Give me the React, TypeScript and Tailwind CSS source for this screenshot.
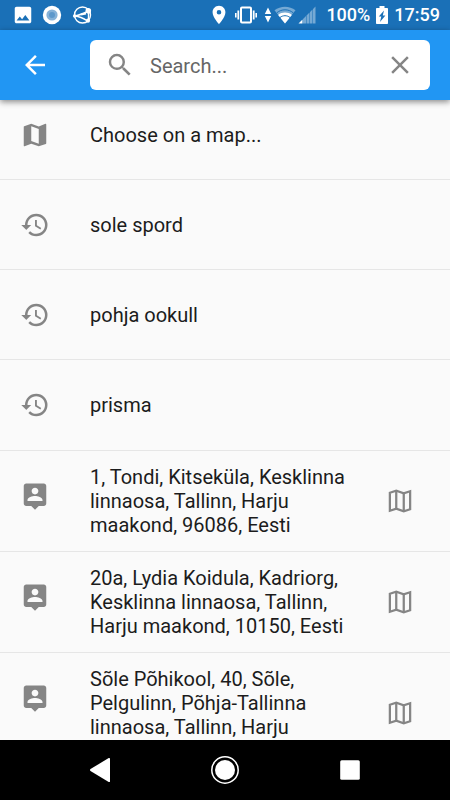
import { useState } from 'react';
import { MdArrowBack, MdClose, MdHistory, MdImage, MdMap, MdPlace, MdSearch } from 'react-icons/md';

const recentSearches = ['sole spord', 'pohja ookull', 'prisma'];

const addresses = [
  '1, Tondi, Kitseküla, Kesklinna linnaosa, Tallinn, Harju maakond, 96086, Eesti',
  '20a, Lydia Koidula, Kadriorg, Kesklinna linnaosa, Tallinn, Harju maakond, 10150, Eesti',
  'Sõle Põhikool, 40, Sõle, Pelgulinn, Põhja-Tallinna linnaosa, Tallinn, Harju',
];

const OutlineMapIcon = () => (
  <svg viewBox="0 0 24 24" className="h-[30px] w-[30px]" fill="none" stroke="currentColor" strokeWidth="1.8" aria-hidden="true">
    <path d="M3.9 5.4 9 3.8l6 2.1 5.1-1.7v14.4L15 20.2l-6-2.1-5.1 1.7z" />
    <path d="M9 3.8v14.3M15 5.9v14.3" />
  </svg>
);

const PersonPinIcon = () => (
  <svg viewBox="0 0 24 24" className="h-[30px] w-[30px]" fill="currentColor" aria-hidden="true">
    <path d="M19 2H5c-1.110 0-2 .9-2 2v14c0 1.100.89 2 2 2h4l3 3 3-3h4c1.100 0 2-.9 2-2V4c0-1.100-.9-2-2-2zm-7 3.300c1.490 0 2.700 1.210 2.700 2.700s-1.210 2.700-2.700 2.700S9.300 9.490 9.300 8s1.210-2.700 2.700-2.700zM18 16H6v-.9c0-2 4-3.100 6-3.100s6 1.100 6 3.100v.9z" />
  </svg>
);

const StatusBar = () => (
  <div className="flex h-[30px] shrink-0 items-center justify-between bg-[#1a70b7] pr-[10px] pl-3 text-lg font-medium text-white">
    <div className="flex items-center gap-2">
      <MdImage className="h-[22px] w-[22px]" />
      <svg viewBox="0 0 20 20" className="h-5 w-5" aria-hidden="true">
        <circle cx="10" cy="10" r="9.2" fill="#fff" />
        <circle cx="10" cy="10" r="5.6" fill="#86b2d8" />
        <circle cx="10" cy="10" r="3" fill="#5d98cb" />
      </svg>
      <svg viewBox="0 0 20 20" className="ml-0.5 h-5 w-5" fill="none" stroke="currentColor" strokeWidth="1.4" aria-hidden="true">
        <circle cx="10.500" cy="10" r="8" />
        <path d="M2.500 11Q7 10.500 15.500 6.500M2.500 11Q9 11.500 15.500 16M16.500 6.500v9" />
        <path d="M9 9.500 14 8.500" strokeWidth="2" />
        <circle cx="2.700" cy="11" r="1.800" fill="currentColor" stroke="none" />
        <circle cx="16.300" cy="5.800" r="2.800" fill="currentColor" stroke="none" />
        <circle cx="16" cy="15.700" r="2.100" fill="currentColor" stroke="none" />
      </svg>
    </div>
    <div className="flex items-center gap-0.5">
      <MdPlace className="h-[22px] w-[22px]" />
      <svg viewBox="0 0 24 18" className="ml-0.5 h-[18px] w-6" fill="none" stroke="currentColor" aria-hidden="true">
        <rect x="7" y="1.500" width="10" height="15" rx="1" strokeWidth="2" />
        <path d="M4.300 4.500v9M19.700 4.500v9" strokeWidth="1.800" />
        <path d="M1.800 7v4.500M22.200 7v4.500" strokeWidth="1.600" />
      </svg>
      <svg viewBox="0 0 8 18" className="ml-1 h-[18px] w-2" fill="currentColor" aria-hidden="true">
        <path d="M4 1.500 7.200 8H.8zM4 16.500.8 10h6.400z" />
      </svg>
      <svg viewBox="0 0 22 18" className="h-[18px] w-[22px]" fill="currentColor" aria-hidden="true">
        <path opacity=".4" d="M11 17.500.5 4.300C6.500-.6 15.500-.6 21.500 4.300z" />
        <path d="M11 17.500 4.200 9c3.600-3.200 10-3.200 13.600 0z" />
        <path d="M2.800 6.800c4.600-4 11.800-4 16.400 0M6 11.500c3-2.400 7-2.400 10 0" fill="none" stroke="#1a70b7" strokeWidth="1" />
      </svg>
      <svg viewBox="0 0 18 18" className="h-[18px] w-[18px]" fill="currentColor" aria-hidden="true">
        <path d="M.5 17.500 4.500 13.500v4z" />
        <path opacity=".4" d="M5 17.500v-4.500L8 10v7.500zM8.500 17.500v-8L11.500 6.500v11zM12 17.500V6l2.500-2.500v14zM15 17.500V3L17.500.5v17z" />
      </svg>
      <span className="ml-2">100%</span>
      <svg viewBox="0 0 12 20" className="ml-1 h-5 w-3" aria-hidden="true">
        <path fill="currentColor" d="M3.500 1h5v2h2.700c.5 0 .8.3.8.8v14.400c0 .5-.3.8-.8.8H.8c-.5 0-.8-.3-.8-.8V3.800C0 3.300.3 3 .8 3h2.700z" />
        <path fill="#1a70b7" d="M8 5.500 2.800 11.500h2.500L4 17l5.400-6.500H6.800z" />
      </svg>
      <span className="ml-1">17:59</span>
    </div>
  </div>
);

const SearchHeader = () => {
  const [query, setQuery] = useState('');

  return (
    <header className="relative z-10 flex shrink-0 items-center bg-[#2196f3] py-[10px] pr-5 shadow-[0_2px_6px_rgba(0,0,0,0.45)]">
      <button type="button" aria-label="Back" className="flex w-[70px] justify-center text-white">
        <MdArrowBack className="h-[30px] w-[30px]" />
      </button>
      <div className="ml-5 flex h-[50px] min-w-0 flex-1 items-center rounded-md bg-white px-[15px] text-[#858585]">
        <MdSearch className="h-[30px] w-[30px] shrink-0" />
        <input
          type="text"
          aria-label="Search"
          placeholder="Search..."
          value={query}
          onChange={(e) => setQuery(e.target.value)}
          className="ml-[15px] min-w-0 flex-1 pt-0.5 text-xl text-[#212121] outline-none placeholder:text-[#666666]"
        />
        <button type="button" aria-label="Clear" onClick={() => setQuery('')}>
          <MdClose className="h-[30px] w-[30px]" />
        </button>
      </div>
    </header>
  );
};

const App = () => (
  <div className="flex h-screen flex-col overflow-hidden bg-[#fafafa] font-['Roboto',sans-serif] text-[#1c1c1c]">
    <StatusBar />
    <SearchHeader />

    {/* List, scrolled slightly under the header */}
    <main className="min-h-0 flex-1 overflow-hidden text-xl leading-6">
      <ul className="-mt-[10px] divide-y divide-[#e6e6e6]">
        <li className="h-[90px]">
          <button type="button" className="flex h-full w-full items-center text-left">
            <span className="flex w-[70px] justify-center text-[#858585]">
              <MdMap className="h-[30px] w-[30px]" />
            </span>
            <span className="ml-5">Choose on a map...</span>
          </button>
        </li>
        {recentSearches.map((item) => (
          <li key={item} className="h-[90px]">
            <button type="button" className="flex h-full w-full items-center text-left">
              <span className="flex w-[70px] justify-center text-[#858585]">
                <MdHistory className="h-[30px] w-[30px]" />
              </span>
              <span className="ml-5">{item}</span>
            </button>
          </li>
        ))}
      </ul>
      <ul>
        {addresses.map((address) => (
          <li key={address} className="flex items-center border-t border-[#e6e6e6] last:min-h-[120px]">
            <button type="button" className="flex min-w-0 flex-1 items-start self-stretch text-left">
              <span className="flex h-[90px] w-[70px] shrink-0 items-center justify-center text-[#858585]">
                <PersonPinIcon />
              </span>
              <span className="ml-5 py-[14px]">{address}</span>
            </button>
            <button type="button" aria-label="Show on map" className="mx-5 flex w-[60px] shrink-0 justify-center text-[#858585]">
              <OutlineMapIcon />
            </button>
          </li>
        ))}
      </ul>
    </main>

    <nav className="flex h-[60px] shrink-0 items-center justify-center gap-[95px] bg-black text-white">
      <button type="button" aria-label="System back">
        <svg viewBox="0 0 30 30" className="h-[30px] w-[30px]" fill="currentColor">
          <path d="M25 3.800v22.400c0 .8-.6 1.100-1.300.7L5.500 16c-.7-.5-.7-1.500 0-2L23.700 3.100c.7-.4 1.300-.1 1.300.7z" />
        </svg>
      </button>
      <button type="button" aria-label="Home">
        <svg viewBox="0 0 30 30" className="h-[30px] w-[30px]">
          <circle cx="15" cy="15" r="13.200" fill="none" stroke="currentColor" strokeWidth="1.500" />
          <circle cx="15" cy="15" r="10" fill="currentColor" />
        </svg>
      </button>
      <button type="button" aria-label="Overview">
        <svg viewBox="0 0 30 30" className="h-[30px] w-[30px]" fill="currentColor">
          <rect x="5.200" y="5.200" width="19.600" height="19.600" rx="1.500" />
        </svg>
      </button>
    </nav>
  </div>
);

export default App;
